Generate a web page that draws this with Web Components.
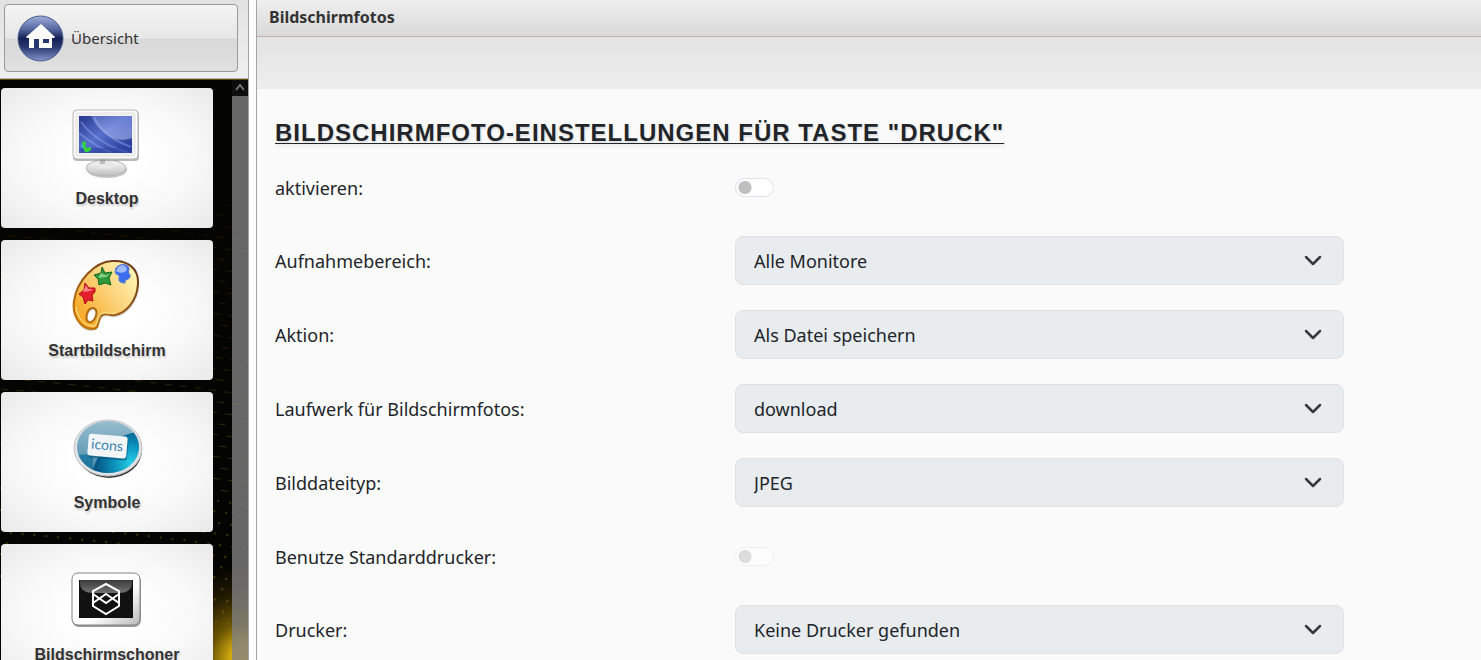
<!DOCTYPE html>
<html lang="de">
<head>
<meta charset="utf-8">
<title>Bildschirmfotos</title>
<style>
html, body { margin: 0; height: 100%; overflow: hidden; }
body { font-family: "Liberation Sans", Arial, sans-serif; color: #212529; background: #fff; }
</style>
</head>
<body>
<app-shell>
  <nav-panel slot="nav">
    <home-button slot="home">Übersicht</home-button>
    <nav-card label="Desktop">
      <svg width="72" height="72" viewBox="0 0 72 72" aria-hidden="true">
        <defs>
          <linearGradient id="scr" x1="0" y1="0" x2="1" y2="1"><stop offset="0" stop-color="#24378c"/><stop offset=".45" stop-color="#5870cc"/><stop offset="1" stop-color="#1d318f"/></linearGradient>
          <linearGradient id="shine" x1="0" y1="0" x2="0" y2="1"><stop offset="0" stop-color="#7f92e0"/><stop offset="1" stop-color="#cfd9fa"/></linearGradient>
          <linearGradient id="foot" x1="0" y1="0" x2="0" y2="1"><stop offset="0" stop-color="#fff"/><stop offset="1" stop-color="#bdbdbd"/></linearGradient>
        </defs>
        <ellipse cx="36" cy="62" rx="20" ry="8" fill="#8b8b8b" opacity=".5"/>
        <ellipse cx="35" cy="60" rx="20" ry="8" fill="url(#foot)" stroke="#b4b4b4"/>
        <path d="M27 49h15v8c1 5-17 5-16 0z" fill="#e9e9e9"/><path d="M29 51h5v5h-5z" fill="#bcbcbc"/>
        <rect x="2" y="3" width="66" height="50" rx="4" fill="#8b8b8b" opacity=".6"/>
        <rect x="2" y="2" width="65" height="49" rx="4" fill="#fcfcfc" stroke="#b5b5b5"/>
        <rect x="5" y="5" width="59" height="43" rx="2" fill="#f0f0f0" stroke="#e2e2e2"/>
        <rect x="8" y="8" width="53" height="37" fill="url(#scr)"/>
        <path d="M20 8h41v22q-14 5-26-4Q24 18 20 8z" fill="url(#shine)" opacity=".45"/>
        <path d="M10 14q17 22 48 31M8 25q20 16 34 20M23 9q9 20 37 30" fill="none" stroke="#a4b5f4" stroke-width="2" opacity=".4"/>
        <path d="M8 40h53v5H8z" fill="#3049a6" opacity=".6"/>
        <circle cx="12" cy="38" r="2" fill="#31b4e8"/>
        <path d="M11 34l3-1 1 3-1 2 2 2 4-1 0 3-3 2-3 0-2-5z" fill="#36d63a"/>
      </svg>
    </nav-card>
    <nav-card label="Startbildschirm">
      <svg width="72" height="72" viewBox="0 0 72 72" aria-hidden="true">
        <defs>
          <linearGradient id="pal" x1="0" y1=".8" x2="1" y2="0"><stop offset="0" stop-color="#f6a41c"/><stop offset=".5" stop-color="#fcd27a"/><stop offset="1" stop-color="#ffffc4"/></linearGradient>
          <linearGradient id="edge" x1="0" y1="1" x2=".8" y2="0"><stop offset="0" stop-color="#c87a0c"/><stop offset="1" stop-color="#6b3a1c"/></linearGradient>
        </defs>
        <path fill-rule="evenodd" d="M41 2C56 1 68 9 67 25c-1 17-12 29-23 31-6 1-10-3-14 1-4 5-3 13-12 13C7 69 2 55 4 41 7 20 24 3 41 2z M22 48c-5 0-9 12-4 14 6 2 11-13 4-14z" fill="#777" opacity=".35" transform="translate(1 1)"/>
        <path fill-rule="evenodd" d="M41 1C56 0 68 8 67 24c-1 17-12 29-23 31-6 1-10-3-14 1-4 5-1 13-8 13C8 69 1 54 3 41 6 20 24 2 41 1z M22 48c-6 0-9 12-4 14 6 2 11-13 4-14z" fill="url(#pal)" stroke="url(#edge)" stroke-width="2"/>
        <path d="M5 47c1 10 8 19 17 19 5 0 4-9 8-12 5-3 8 1 15-1" fill="none" stroke="#ffefa0" stroke-width="1"/>
        <path d="M31 7l3 6 7-1-3 6 2 7-6-2-6 2-1-6-4-4 7-2z" fill="#2e9938" stroke="#17671f"/>
        <path d="M30 13l4 2 5-1-4 3-8 1z" fill="#a9e5a0" opacity=".7"/>
        <path d="M14 23l4 5 6 0 0 4-3 3 1 6-5-1-3 4-2-7-4-3 5-4z" fill="#e3202c" stroke="#b60d18"/>
        <path d="M15 25l2 4 5 0-3 2-7 1z" fill="#ff9ca0" opacity=".8"/>
        <path d="M47 6c5-3 12-1 11 4-2 3 2 4 1 7-2 4-5 1-5 6-3 0-6-1-6-3 0-3 1-5-3-6-2-3 0-7 2-8z" fill="#3c6cf0" stroke="#5978cf"/>
        <path d="M47 7c4-3 9-2 9 3-3 4-9 3-11 1z" fill="#b9ccff" opacity=".8"/>
      </svg>
    </nav-card>
    <nav-card label="Symbole">
      <svg width="72" height="72" viewBox="0 0 72 72" aria-hidden="true">
        <defs>
          <linearGradient id="sky" x1="0" y1="0" x2="0" y2="1"><stop offset="0" stop-color="#a8c6d4"/><stop offset="1" stop-color="#347fa3"/></linearGradient>
          <radialGradient id="sea" cx=".8" cy=".6" r=".7"><stop offset="0" stop-color="#27d0e8"/><stop offset=".5" stop-color="#0b91bb"/><stop offset="1" stop-color="#075684"/></radialGradient>
          <clipPath id="disc"><ellipse cx="37" cy="35" rx="31" ry="26"/></clipPath>
        </defs>
        <ellipse cx="38" cy="38" rx="33" ry="28" fill="#3a3a3a"/>
        <ellipse cx="37" cy="36" rx="34" ry="28" fill="#e0e2e4" stroke="#c0c4c6"/>
        <g clip-path="url(#disc)">
          <rect width="72" height="72" fill="url(#sky)"/>
          <path d="M21 72C18 48 40 21 70 20v52z" fill="url(#sea)"/>
          <path d="M0 42q14 2 22-1v27H0z" fill="#0b6d9b" opacity=".7"/>
        </g>
        <g transform="rotate(5 36 34)"><rect x="18" y="25" width="39" height="22" rx="3" fill="#075377" opacity=".6"/><rect x="17" y="23" width="39" height="22" rx="3" fill="#f3f6f8"/>
        <text x="36" y="38" text-anchor="middle" font-family="Lato, sans-serif" font-size="14" font-weight="400" style="text-shadow:none" fill="#3a83ae">icons</text></g>
      </svg>
    </nav-card>
    <nav-card label="Bildschirmschoner">
      <svg width="72" height="72" viewBox="0 0 72 72" aria-hidden="true">
        <defs>
          <linearGradient id="frm" x1="0" y1="0" x2="1" y2="1"><stop offset=".6" stop-color="#fff"/><stop offset="1" stop-color="#b8b8b8"/></linearGradient>
          <linearGradient id="gls" x1="0" y1="0" x2="0" y2="1"><stop offset="0" stop-color="#444"/><stop offset="1" stop-color="#8a8a8a"/></linearGradient>
        </defs>
        <rect x="1" y="10" width="69" height="53" rx="7" fill="#999"/>
        <rect x="1" y="9" width="68" height="52" rx="6" fill="url(#frm)" stroke="#858585"/>
        <rect x="8" y="16" width="54" height="38" fill="#111"/>
        <path d="M9 16h52v3q0 10-14 10H23Q9 29 9 19z" fill="url(#gls)" opacity=".8"/>
        <path d="M35 20l13 7v15l-13 8-13-8V27z M22 30l13 9 13-9 M22 39l13-9 13 9" fill="none" stroke="#fff" stroke-width="2"/>
      </svg>
    </nav-card>
  </nav-panel>
  <settings-page title-text="Bildschirmfotos" heading='Bildschirmfoto-Einstellungen für Taste "Druck"'>
    <setting-switch label="aktivieren:"></setting-switch>
    <setting-select label="Aufnahmebereich:" value="Alle Monitore"></setting-select>
    <setting-select label="Aktion:" value="Als Datei speichern"></setting-select>
    <setting-select label="Laufwerk für Bildschirmfotos:" value="download"></setting-select>
    <setting-select label="Bilddateityp:" value="JPEG"></setting-select>
    <setting-switch label="Benutze Standarddrucker:" disabled></setting-switch>
    <setting-select label="Drucker:" value="Keine Drucker gefunden"></setting-select>
  </settings-page>
</app-shell>

<script>
class Base extends HTMLElement {
  constructor() {
    super();
    this.attachShadow({ mode: 'open' }).innerHTML = '<style>*{box-sizing:border-box}</style>' + this.view();
  }
  esc(name) {
    return (this.getAttribute(name) || '').replace(/&/g, '&amp;').replace(/"/g, '&quot;').replace(/</g, '&lt;');
  }
}

customElements.define('app-shell', class extends Base {
  view() {
    return `<style>
      :host { display: grid; grid-template-columns: 249px minmax(0, 1fr); column-gap: 7px; height: 100vh; }
      ::slotted(*) { min-height: 0; }
    </style><slot name="nav"></slot><slot></slot>`;
  }
});

customElements.define('nav-panel', class extends Base {
  view() {
    // Golden dotted waves, brighter towards the bottom
    let waves = '';
    for (let i = 0; i < 40; i++) {
      const y = 120 + i * 11;
      const dots = i > 26;
      waves += `<path d="M0 ${y - 20}Q120 ${y - 10} 248 ${y + 8}" stroke-width="${dots ? 2 : 1}" stroke-dasharray="${dots ? '2 10' : '7 8'}" stroke-dashoffset="${i * 7 % 15}" opacity="${(0.12 + i / 90).toFixed(2)}"/>`;
    }
    return `<style>
      :host { display: flex; flex-direction: column; border-right: 1px solid #a5a5a5; }
      .top { flex: none; height: 79px; padding: 4px 10px 7px 4px; background: linear-gradient(#e2e2e2, #efefef); border-bottom: 1px solid #b8b8b8; }
      .area { flex: 1; min-height: 0; position: relative; display: grid; grid-template-columns: minmax(0, 1fr) 16px; border-top: 1px solid #5c4c00; background: radial-gradient(circle at right bottom, #e8c21c 0, #cfa80e 18px, #6b5504 38px, #241c00 66px, transparent 95px), #040401; }
      .waves { position: absolute; inset: 0; width: 100%; height: 100%; fill: none; stroke: #8f6c08; }
      .list { position: relative; overflow: hidden; display: flex; flex-direction: column; gap: 12px; padding: 8px 19px 0 1px; }
      .bar { position: relative; background: rgba(128,128,128,.8); }
      .bar svg { display: block; background: #0d0d0d; }
    </style>
    <div class="top"><slot name="home"></slot></div>
    <div class="area">
      <svg class="waves" aria-hidden="true">${waves}</svg>
      <div class="list"><slot></slot></div>
      <div class="bar"><svg width="16" height="16" viewBox="0 0 16 16" fill="none" stroke="#757575" stroke-width="2"><path d="M4 10l4-5 4 5"/></svg></div>
    </div>`;
  }
});

customElements.define('home-button', class extends Base {
  view() {
    return `<style>
      :host { display: block; height: 68px; }
      button { width: 100%; height: 100%; display: flex; align-items: center; gap: 7px; padding: 0 12px; border: 1px solid #999; border-radius: 4px; background: linear-gradient(#f4f4f4, #e7e7e7 50%, #d8d8d8 52%, #e0e0e0); font: 15px/24px "Noto Sans", sans-serif; color: #333; }
    </style>
    <button type="button"><svg width="47" height="47" viewBox="0 0 47 47" aria-hidden="true">
      <defs><linearGradient id="b" x1="0" y1="0" x2="0" y2="1"><stop offset="0" stop-color="#a0aedd"/><stop offset=".28" stop-color="#5a6ba3"/><stop offset=".5" stop-color="#152155"/><stop offset=".7" stop-color="#2c3a72"/><stop offset="1" stop-color="#8496cc"/></linearGradient></defs>
      <circle cx="23.500" cy="23.500" r="22.500" fill="url(#b)" stroke="#4a5c8c"/>
      <path d="M24 9l14 13-1 1h-2v10H12V23h-2l-1-1z" fill="#fff"/><path d="M17 24h5v9h-5zM26 24h6v4h-6z" fill="#25376f"/>
    </svg><span><slot></slot></span></button>`;
  }
});

customElements.define('nav-card', class extends Base {
  view() {
    return `<style>
      :host { display: block; flex: none; height: 140px; }
      button { width: 100%; height: 100%; display: flex; flex-direction: column; align-items: center; gap: 8px; padding: 20px 0 0; border: 0; border-radius: 4px; background: radial-gradient(ellipse at center, #fff 20%, #f8f8f8 60%, #e9e9e9 100%); font: bold 16px/22px "Liberation Sans", Arial, sans-serif; color: #333; text-shadow: 1px 2px 2px #ccc; }
      ::slotted(svg) { display: block; flex: none; }
    </style><button type="button"><slot></slot><span>${this.esc('label')}</span></button>`;
  }
});

customElements.define('settings-page', class extends Base {
  view() {
    return `<style>
      :host { display: block; overflow: hidden; background: #fafafa; border-left: 1px solid #a5a5a5; }
      header { height: 37px; padding: 0 12px; border-bottom: 1px solid #c4b0b0; background: linear-gradient(#efefef, #d9d9d9); font: bold 16px/34px "Noto Sans", sans-serif; color: #333; }
      .tools { height: 52px; background: linear-gradient(#e3e3e3, #eee); }
      main { padding: 28px 137px 24px 18px; }
      h1 { margin: 0 0 14px; font: bold 24px/32px "Liberation Sans", Arial, sans-serif; letter-spacing: 1px; text-transform: uppercase; text-decoration: underline; text-decoration-thickness: 1px; text-underline-offset: 2px; text-shadow: 1px 2px 2px #ddd; white-space: nowrap; }
      form { display: grid; gap: 25px; }
    </style>
    <header>${this.esc('title-text')}</header><div class="tools"></div>
    <main><h1>${this.esc('heading')}</h1><form><slot></slot></form></main>`;
  }
});

const rowStyle = `
  :host { display: grid; grid-template-columns: 460fr 609fr; align-items: center; font: 18px/27px "Noto Sans", sans-serif; color: #212529; }
  label { padding-top: 2px; }`;

customElements.define('setting-switch', class extends Base {
  view() {
    return `<style>${rowStyle}
      :host { height: 48px; }
      input { appearance: none; width: 39px; height: 19px; margin: 0; border: 1px solid #dee2e6; border-radius: 10px; background: radial-gradient(circle at 9px 50%, #bfbfbf 6px, transparent 7px), #fff; }
      input:disabled { opacity: .5; }
    </style><label for="c">${this.esc('label')}</label><input id="c" type="checkbox" role="switch"${this.hasAttribute('disabled') ? ' disabled' : ''}>`;
  }
});

customElements.define('setting-select', class extends Base {
  view() {
    return `<style>${rowStyle}
      .box { display: grid; align-items: center; }
      .box > * { grid-area: 1 / 1; }
      select { appearance: none; width: 100%; height: 49px; padding: 1px 48px 0 18px; border: 1px solid #dee2e6; border-radius: 8px; background: #e8ecef; font: inherit; color: inherit; opacity: 1; }
      svg { justify-self: end; margin-right: 22px; pointer-events: none; }
    </style><label for="c">${this.esc('label')}</label>
    <div class="box"><select id="c" disabled><option>${this.esc('value')}</option></select>
    <svg width="18" height="18" viewBox="0 0 18 18" fill="none" stroke="#343a40" stroke-width="2.500" stroke-linecap="round" stroke-linejoin="round" aria-hidden="true"><path d="M2 5l7 7 7-7"/></svg></div>`;
  }
});
</script>
</body>
</html>
